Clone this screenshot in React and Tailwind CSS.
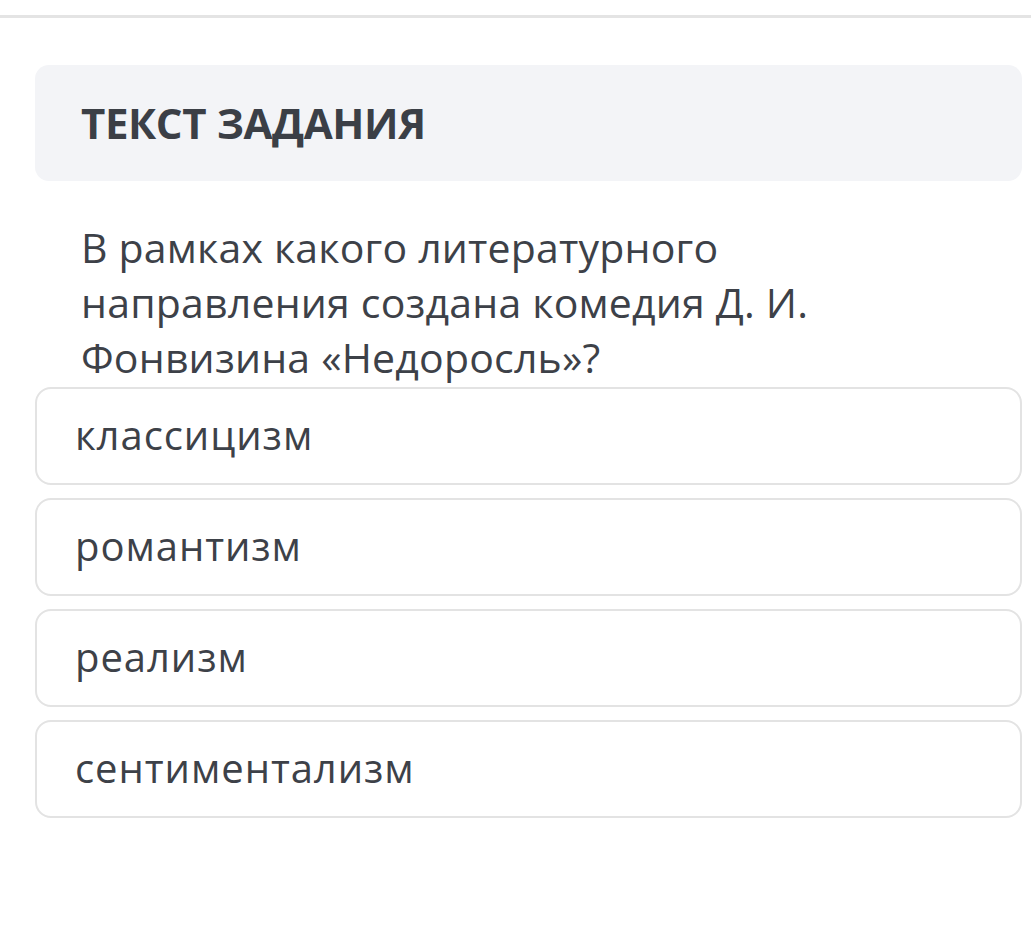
export default function App() {
  const options = ['классицизм', 'романтизм', 'реализм', 'сентиментализм'];

  return (
    <div className="w-[1031px] h-[932px] bg-white overflow-hidden" style={{ fontFamily: '"Open Sans", "Noto Sans", sans-serif' }}>
      <div className="h-[15px]" />
      <div className="h-[3px] bg-[#e4e4e4]" />

      <div className="pl-[35px] pr-[9px] pt-[47px]">
        {/* Task header */}
        <div className="h-[116px] rounded-[14px] bg-[#f3f4f7] flex items-center pl-[46px]">
          <h2 className="text-[42px] font-bold text-[#3b3f46] tracking-[-0.4px] leading-none">ТЕКСТ ЗАДАНИЯ</h2>
        </div>

        {/* Question */}
        <p className="mt-[39px] pl-[46px] pr-[160px] text-[41px] leading-[55px] text-[#3d4148] tracking-[0.2px]">
          В рамках какого литературного направления создана комедия Д. И. Фонвизина «Недоросль»?
        </p>

        {/* Answers */}
        <div className="mt-[2px] flex flex-col gap-[13px]">
          {options.map((opt) => (
            <div
              key={opt}
              className="h-[98px] rounded-[16px] border-2 border-[#e3e3e3] bg-white flex items-start pl-[38px] pt-[22px]"
            >
              <span className="text-[40px] leading-[48px] text-[#3d4148] tracking-[0.95px]">{opt}</span>
            </div>
          ))}
        </div>
      </div>
    </div>
  );
}
